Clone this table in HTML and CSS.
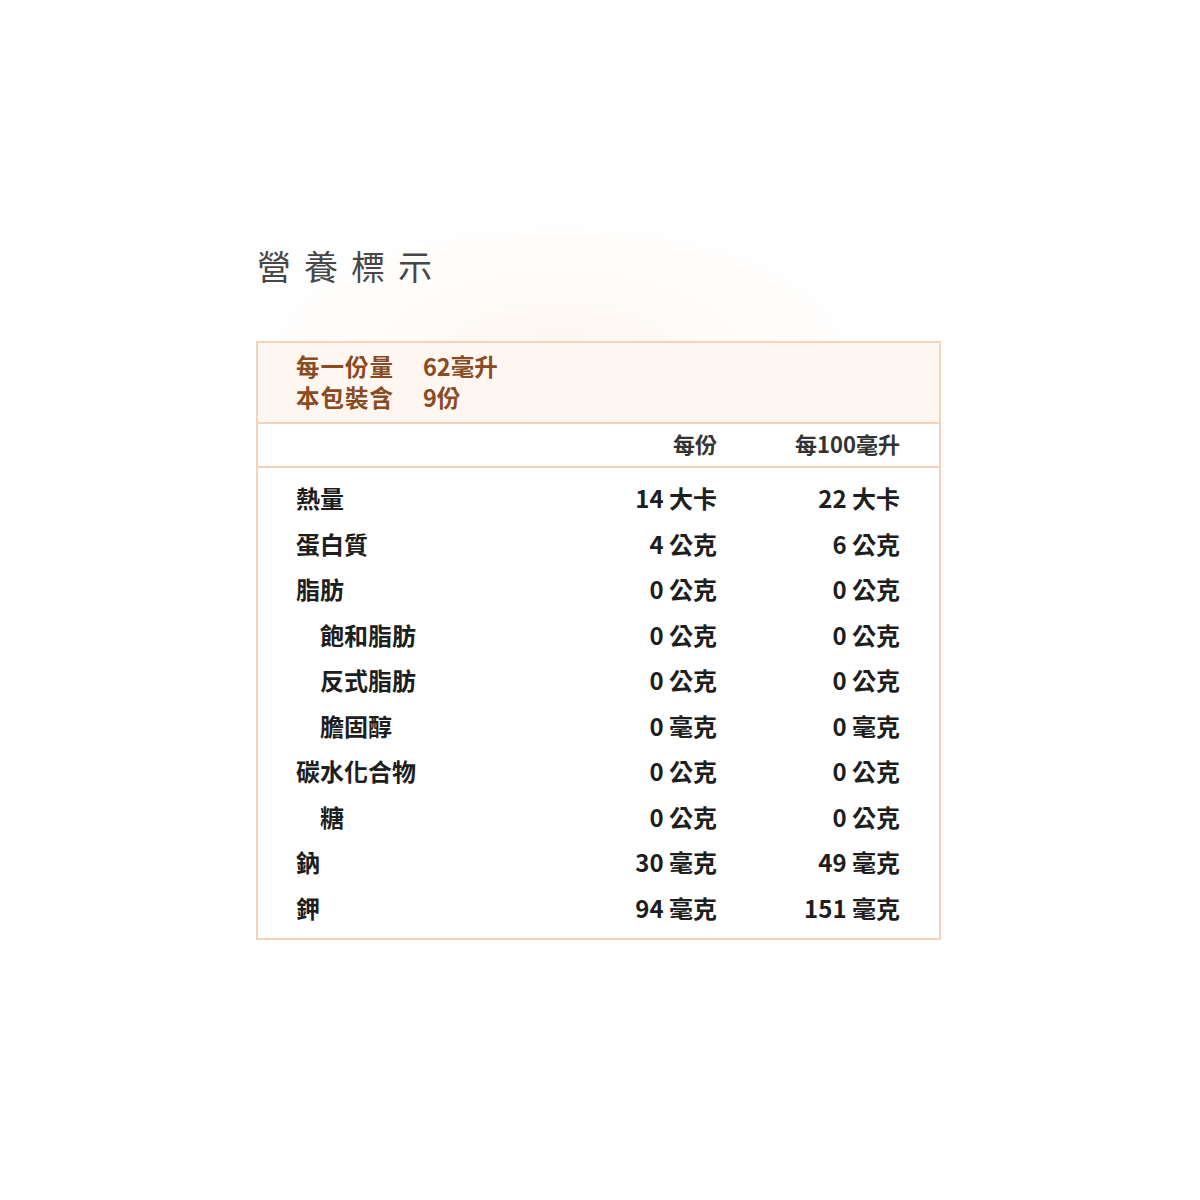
FILE: index.html
```html
<!DOCTYPE html>
<html lang="zh-Hant">
<head>
<meta charset="utf-8">
<link rel="stylesheet" href="styles.css">
</head>
<body>
<div class="page">
  <h1 class="title">營養標示</h1>
  <div class="panel">
    <div class="serving">
      <div class="serving-row"><span class="serving-key">每一份量</span><span>62毫升</span></div>
      <div class="serving-row"><span class="serving-key">本包裝含</span><span>9份</span></div>
    </div>
    <div class="row head">
      <span></span><span class="num">每份</span><span class="num">每100毫升</span>
    </div>
    <div class="rows">
      <div class="row"><span>熱量</span><span class="num">14 大卡</span><span class="num">22 大卡</span></div>
      <div class="row"><span>蛋白質</span><span class="num">4 公克</span><span class="num">6 公克</span></div>
      <div class="row"><span>脂肪</span><span class="num">0 公克</span><span class="num">0 公克</span></div>
      <div class="row"><span class="sub">飽和脂肪</span><span class="num">0 公克</span><span class="num">0 公克</span></div>
      <div class="row"><span class="sub">反式脂肪</span><span class="num">0 公克</span><span class="num">0 公克</span></div>
      <div class="row"><span class="sub">膽固醇</span><span class="num">0 毫克</span><span class="num">0 毫克</span></div>
      <div class="row"><span>碳水化合物</span><span class="num">0 公克</span><span class="num">0 公克</span></div>
      <div class="row"><span class="sub">糖</span><span class="num">0 公克</span><span class="num">0 公克</span></div>
      <div class="row"><span>鈉</span><span class="num">30 毫克</span><span class="num">49 毫克</span></div>
      <div class="row"><span>鉀</span><span class="num">94 毫克</span><span class="num">151 毫克</span></div>
    </div>
  </div>
</div>
</body>
</html>
```
FILE: styles.css
```css
html, body {
  margin: 0;
  padding: 0;
  background: #ffffff;
}
body {
  width: 1200px;
  height: 1200px;
  font-family: "Liberation Sans", "Noto Sans CJK TC", sans-serif;
  background:
    radial-gradient(ellipse 460px 200px at 560px 350px, rgba(250, 228, 210, 0.3), rgba(255,255,255,0) 70%),
    #ffffff;
}
.page {
  padding: 244px 0 0 256px;
  display: flex;
  flex-direction: column;
}
.title {
  margin: 0 0 0 1px;
  font-family: "Noto Sans CJK TC", sans-serif;
  font-weight: 400;
  font-size: 34px;
  line-height: 44px;
  letter-spacing: 13px;
  color: #474747;
}
.panel {
  margin-top: 53px;
  width: 681px;
  border: 2px solid #f6d2b8;
  background: rgba(255, 255, 255, 0.85);
  display: flex;
  flex-direction: column;
}
.serving {
  background: #fdf6f1;
  padding: 8px 0 9px 38px;
  border-bottom: 2px solid #f6d2b8;
  font-family: "Noto Sans CJK TC", sans-serif;
  font-weight: 700;
  font-size: 23.5px;
  line-height: 31px;
  color: #8a4a22;
}
.serving-row {
  display: flex;
}
.serving-key {
  width: 127px;
  letter-spacing: 1px;
}
.row {
  display: grid;
  grid-template-columns: 1fr 180px 183px;
  padding: 0 39px 0 38px;
  height: 45.5px;
  align-items: center;
  font-family: "Noto Sans CJK TC", sans-serif;
  font-weight: 700;
  font-size: 24px;
  color: #1e1e1e;
}
.row.head {
  height: 38px;
  padding-bottom: 4px;
  border-bottom: 2px solid #f6d2b8;
  font-size: 22px;
  color: #333;
}
.rows {
  padding: 7px 0 8px;
}
.num {
  text-align: right;
}
.sub {
  padding-left: 24px;
}
```
